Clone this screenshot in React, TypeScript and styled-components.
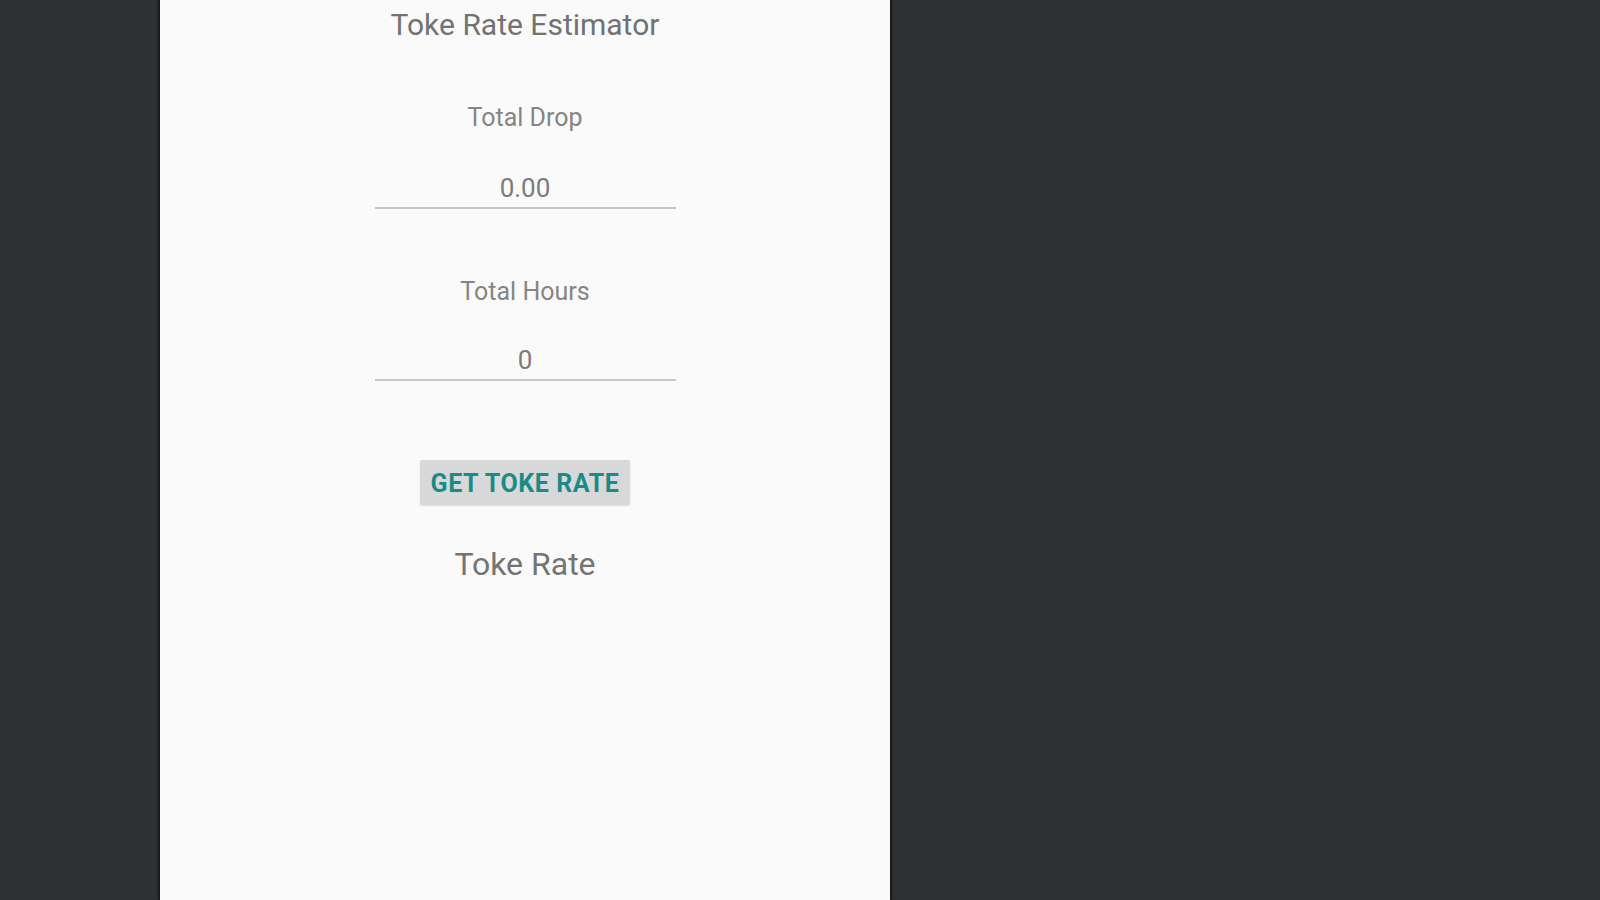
import React from "react";
import styled, { createGlobalStyle } from "styled-components";

const Global = createGlobalStyle`
  html, body {
    margin: 0;
    padding: 0;
    background: #2e3032;
    font-family: Roboto, "Liberation Sans", sans-serif;
  }
`;

const Page = styled.div`
  display: flex;
  flex-direction: row;
  height: 900px;
  overflow: hidden;
  background: #2e3032;
`;

const Screen = styled.main`
  margin-left: 160px;
  width: 730px;
  height: 900px;
  background: #fafafa;
  box-shadow: 0 0 3px 1px rgba(0, 0, 0, 0.85);
  display: flex;
  flex-direction: column;
  align-items: center;
`;

const Title = styled.h1`
  margin: 10px 0 0;
  font-size: 30px;
  line-height: 30px;
  font-weight: 400;
  color: #727272;
`;

const Label = styled.div<{ $top: number }>`
  margin-top: ${(p) => p.$top}px;
  font-size: 25px;
  line-height: 25px;
  color: #858585;
`;

const Field = styled.input<{ $top: number }>`
  margin-top: ${(p) => p.$top}px;
  width: 301px;
  box-sizing: border-box;
  padding: 0 0 6px;
  border: none;
  border-bottom: 2px solid #c6c6c6;
  background: transparent;
  font-family: Roboto, "Liberation Sans", sans-serif;
  font-size: 26px;
  line-height: 26px;
  height: 34px;
  color: #7c7c7c;
  text-align: center;
  outline: none;
  &::placeholder {
    color: #7c7c7c;
  }
`;

const Button = styled.button`
  margin-top: 79px;
  height: 45px;
  padding: 2px 11px 0;
  border: none;
  border-radius: 2px;
  background: #d7d8d8;
  box-shadow: 0 1px 2px rgba(0, 0, 0, 0.12);
  font-family: Roboto, "Liberation Sans", sans-serif;
  font-weight: 700;
  font-size: 25px;
  line-height: 43px;
  color: #1a8b88;
  text-transform: uppercase;
  letter-spacing: 0.6px;
`;

const Result = styled.div`
  margin-top: 43px;
  font-size: 32px;
  line-height: 32px;
  color: #747474;
`;

export default function App() {
  return (
    <>
      <Global />
      <Page>
        <Screen>
          <Title>Toke Rate Estimator</Title>
          <Label $top={65}>Total Drop</Label>
          <Field $top={45} placeholder="0.00" readOnly />
          <Label $top={70}>Total Hours</Label>
          <Field $top={43} placeholder="0" readOnly />
          <Button>Get Toke Rate</Button>
          <Result>Toke Rate</Result>
        </Screen>
      </Page>
    </>
  );
}
